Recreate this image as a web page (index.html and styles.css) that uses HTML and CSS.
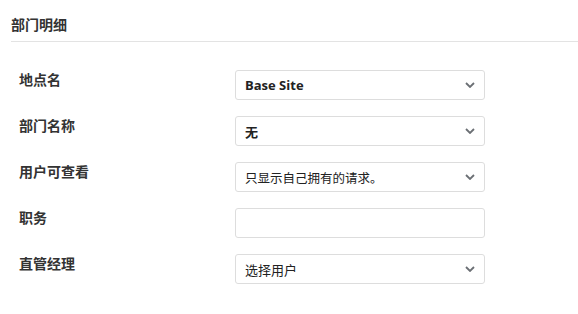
FILE: index.html
```html
<!DOCTYPE html>
<html lang="zh">
<head>
<meta charset="utf-8">
<link rel="stylesheet" href="styles.css">
</head>
<body>
<div class="panel">
  <h2 class="title">部门明细</h2>
  <div class="form">
    <div class="row">
      <div class="label">地点名</div>
      <div class="field select bold"><span>Base Site</span><svg class="chev" width="10" height="6" viewBox="0 0 10 6"><path d="M1 1 L5 5 L9 1" fill="none" stroke="#6b6f74" stroke-width="1.8"/></svg></div>
    </div>
    <div class="row">
      <div class="label">部门名称</div>
      <div class="field select bold"><span>无</span><svg class="chev" width="10" height="6" viewBox="0 0 10 6"><path d="M1 1 L5 5 L9 1" fill="none" stroke="#6b6f74" stroke-width="1.8"/></svg></div>
    </div>
    <div class="row">
      <div class="label">用户可查看</div>
      <div class="field select small"><span>只显示自己拥有的请求。</span><svg class="chev" width="10" height="6" viewBox="0 0 10 6"><path d="M1 1 L5 5 L9 1" fill="none" stroke="#6b6f74" stroke-width="1.8"/></svg></div>
    </div>
    <div class="row">
      <div class="label">职务</div>
      <div class="field"></div>
    </div>
    <div class="row">
      <div class="label">直管经理</div>
      <div class="field select"><span>选择用户</span><svg class="chev" width="10" height="6" viewBox="0 0 10 6"><path d="M1 1 L5 5 L9 1" fill="none" stroke="#6b6f74" stroke-width="1.8"/></svg></div>
    </div>
  </div>
</div>
</body>
</html>
```
FILE: styles.css
```css
html, body {
  margin: 0;
  padding: 0;
  background: #fff;
}
body {
  font-family: "Open Sans", "Noto Sans CJK SC", sans-serif;
  color: #333;
}
.panel {
  padding-left: 11px;
}
.title {
  margin: 0;
  font-size: 14px;
  font-weight: 700;
  line-height: 20px;
  padding-top: 15px;
  padding-bottom: 6px;
  border-bottom: 1px solid #e3e3e3;
  color: #333;
}
.form {
  padding-left: 8px;
  padding-top: 28px;
  display: flex;
  flex-direction: column;
  gap: 16px;
}
.row {
  display: flex;
  align-items: flex-start;
}
.label {
  width: 216px;
  font-size: 14px;
  font-weight: 700;
  line-height: 20px;
}
.field {
  box-sizing: border-box;
  width: 250px;
  height: 30px;
  border: 1px solid #ddd;
  border-radius: 3px;
  background: #fff;
  display: flex;
  align-items: center;
  padding: 0 9px 0 9px;
  font-size: 13px;
  color: #222;
}
.field span {
  flex: 1;
}
.bold span {
  font-weight: 700;
}
.small span {
  font-size: 12.5px;
}
.chev {
  display: block;
}
```
